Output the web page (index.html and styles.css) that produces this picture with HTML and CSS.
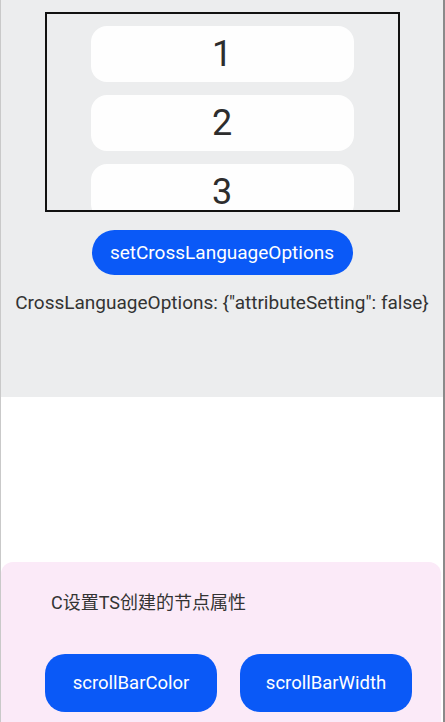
FILE: index.html
```html
<!DOCTYPE html>
<html>
<head>
<meta charset="utf-8">
<link rel="stylesheet" href="styles.css">
</head>
<body>
<div class="frame">
  <section class="top">
    <div class="box">
      <div class="list">
        <div class="item">1</div>
        <div class="item">2</div>
        <div class="item">3</div>
      </div>
    </div>
    <button class="btn-main">setCrossLanguageOptions</button>
    <div class="info">CrossLanguageOptions: {"attributeSetting": false}</div>
  </section>
  <section class="middle"></section>
  <section class="bottom">
    <div class="title">C设置TS创建的节点属性</div>
    <div class="actions">
      <button class="btn-sq">scrollBarColor</button>
      <button class="btn-sq">scrollBarWidth</button>
    </div>
  </section>
</div>
</body>
</html>
```

FILE: styles.css
```css
html, body {
  margin: 0;
  padding: 0;
  background: #ffffff;
}
body {
  font-family: Roboto, "Noto Sans CJK SC", sans-serif;
}
.frame {
  width: 445px;
  height: 722px;
  box-sizing: border-box;
  border-left: 1px solid #c9c9c9;
  border-right: 2px solid #8a8a8a;
  display: flex;
  flex-direction: column;
  overflow: hidden;
}
.top {
  height: 397px;
  background: #ecedee;
  display: flex;
  flex-direction: column;
  align-items: center;
  flex-shrink: 0;
}
.box {
  margin-top: 12px;
  margin-left: 1px;
  width: 355px;
  height: 200px;
  box-sizing: border-box;
  border: 2px solid #111111;
  overflow: hidden;
}
.list {
  display: flex;
  flex-direction: column;
  align-items: center;
  gap: 13px;
  padding-top: 12px;
}
.item {
  width: 263px;
  height: 56px;
  flex-shrink: 0;
  background: #fefefe;
  border-radius: 16px;
  display: flex;
  align-items: center;
  justify-content: center;
  font-size: 36px;
  color: #2d2d2d;
  margin-left: -1px;
}
.btn-main {
  margin-top: 18px;
  width: 261px;
  height: 45px;
  border: none;
  border-radius: 23px;
  background: #0a59f7;
  color: #ffffff;
  font-family: Roboto, sans-serif;
  font-size: 19px;
  padding: 0;
}
.info {
  margin-top: 16px;
  font-size: 19px;
  line-height: 24px;
  color: #333333;
  white-space: nowrap;
}
.middle {
  height: 165px;
  flex-shrink: 0;
  background: #ffffff;
}
.bottom {
  flex: 1;
  background: #fbeaf8;
  border-radius: 12px 12px 0 0;
  margin-right: 2px;
  padding: 29px 0 0 50px;
}
.title {
  font-size: 18px;
  line-height: 24px;
  color: #333333;
}
.actions {
  margin-top: 39px;
  margin-left: -6px;
  display: flex;
  gap: 23px;
}
.btn-sq {
  width: 172px;
  height: 58px;
  border: none;
  border-radius: 20px;
  background: #0a59f7;
  color: #ffffff;
  font-family: Roboto, sans-serif;
  font-size: 18.5px;
  padding: 0;
}
```
